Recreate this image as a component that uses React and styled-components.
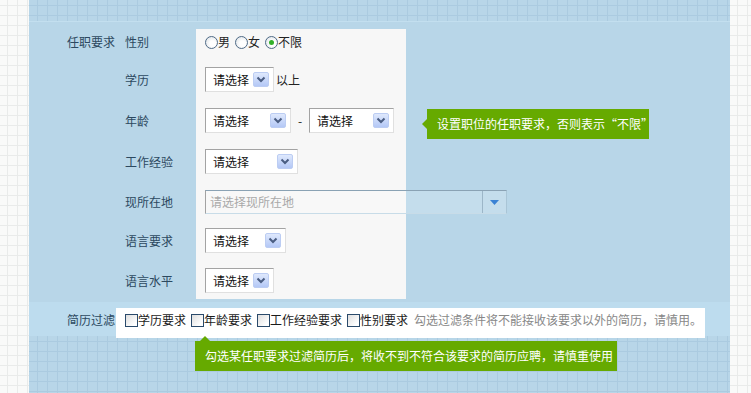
import React from 'react';
import styled, { createGlobalStyle, css } from 'styled-components';

const GlobalStyle = createGlobalStyle`
  html, body {
    margin: 0;
    padding: 0;
  }
  body {
    width: 751px;
    height: 393px;
    overflow: hidden;
    font-family: "Noto Sans CJK SC", "Noto Sans", sans-serif;
    font-size: 12px;
    color: #222;
    background-color: #f9faf9;
    background-image:
      linear-gradient(90deg, #e9ebea 1px, transparent 1px),
      linear-gradient(#e9ebea 1px, transparent 1px);
    background-size: 10px 10px;
    background-position: 7px 5px;
  }
`;

const blueGrid = css`
  background-color: #b8d6e8;
  background-image:
    linear-gradient(90deg, #abcbe0 1px, transparent 1px),
    linear-gradient(#abcbe0 1px, transparent 1px);
  background-size: 10px 10px;
  background-position: 8px 5px;
`;

const Panel = styled.div`
  position: relative;
  margin-left: 29px;
  width: 701px;
  height: 393px;
  display: flex;
  flex-direction: column;
`;

const TopStrip = styled.div`
  ${blueGrid};
  height: 21px;
  border-bottom: 1px solid #c3dfef;
`;

const Section = styled.div`
  display: flex;
  align-items: flex-start;
  padding: 7px 0 3px;
  background: #b8d6e8;
`;

const SectionTitle = styled.div`
  width: 87px;
  padding-right: 1px;
  box-sizing: border-box;
  text-align: right;
  line-height: ${(p) => p.$lh || 26}px;
  padding-top: ${(p) => p.$pt || 0}px;
  color: #2c4960;
  flex-shrink: 0;
`;

const Form = styled.div`
  display: grid;
  grid-template-columns: 80px 210px;
  grid-template-rows: 38px 41px 41px 41px 38px 40px 31px;
`;

const FieldLabel = styled.div`
  padding-left: 9px;
  line-height: ${(p) => p.$lh}px;
  color: #2c4960;
`;

const Field = styled.div`
  background: #f7f7f7;
  padding: ${(p) => p.$pt || 0}px 0 0 9px;
  display: flex;
  align-items: flex-start;
  gap: ${(p) => p.$gap || 0}px;
`;

const RadioGroup = styled.label`
  display: inline-flex;
  align-items: center;
  line-height: 14px;
`;

const RadioDot = styled.span`
  width: 13px;
  height: 13px;
  box-sizing: border-box;
  border-radius: 50%;
  border: 1px solid #4f6a86;
  background: radial-gradient(circle at 60% 60%, #ffffff 30%, #d8dde2 100%);
  display: inline-flex;
  align-items: center;
  justify-content: center;
  &::after {
    content: '';
    width: 5px;
    height: 5px;
    border-radius: 50%;
    background: ${(p) => (p.$on ? '#32b02a' : 'transparent')};
  }
`;

const Select = styled.div`
  width: ${(p) => p.$w}px;
  height: 25px;
  box-sizing: border-box;
  background: #fff;
  border: 1px solid;
  border-color: #a3a3a3 #e0e0e0 #e0e0e0 #a3a3a3;
  padding: 0 4px 0 7px;
  display: flex;
  align-items: center;
  justify-content: space-between;
  color: #111;
  flex-shrink: 0;
`;

const ArrowBox = styled.span`
  width: 16px;
  height: 15px;
  box-sizing: border-box;
  border: 1px solid #bccdf3;
  border-radius: 2px;
  background: linear-gradient(#dfe9fd, #b4c8f6);
  display: flex;
  align-items: center;
  justify-content: center;
`;

const Suffix = styled.span`
  line-height: 25px;
  margin-left: 2px;
`;

const Dash = styled.span`
  width: 18px;
  text-align: center;
  line-height: 25px;
`;

const CityInput = styled.div`
  width: 302px;
  height: 24px;
  box-sizing: border-box;
  flex-shrink: 0;
  display: flex;
  background: rgba(255, 255, 255, 0.18);
  border: 1px solid;
  border-color: #8aa2b4 #a9c5d6 #c8dce8 #a2a2a2;
`;

const Placeholder = styled.span`
  flex: 1;
  padding-left: 4px;
  line-height: 22px;
  color: #a9a9a9;
`;

const DropBtn = styled.span`
  width: 23px;
  border-left: 1px solid #9cb6c8;
  display: flex;
  align-items: center;
  justify-content: center;
`;

const FilterStrip = styled.div`
  display: flex;
  align-items: flex-start;
  height: 34px;
  background: #bddcee;
`;

const FilterBox = styled.div`
  margin-top: 6px;
  margin-bottom: -2px;
  width: 589px;
  height: 30px;
  box-sizing: border-box;
  background: #fff;
  padding: 5px 0 0 9px;
  display: flex;
  align-items: flex-start;
  gap: 5px;
  line-height: 14px;
  position: relative;
`;

const Check = styled.label`
  display: inline-flex;
  align-items: center;
  color: #1c1c1c;
`;

const CheckBox = styled.span`
  width: 13px;
  height: 13px;
  box-sizing: border-box;
  border: 1px solid #2a4a6b;
  background: linear-gradient(135deg, #dedede, #ffffff 80%);
`;

const Hint = styled.span`
  color: #888;
  margin-left: 1px;
`;

const BottomStrip = styled.div`
  ${blueGrid};
  flex: 1;
`;

const Tip = styled.div`
  position: absolute;
  background: #66aa00;
  color: #fff;
  height: 30px;
  line-height: 30px;
  padding-left: 10px;
  box-sizing: border-box;
  white-space: nowrap;
  &::before {
    content: '';
    position: absolute;
    border: 5px solid transparent;
  }
`;

const SideTip = styled(Tip)`
  left: 398px;
  top: 109px;
  width: 222px;
  &::before {
    left: -10px;
    top: 10px;
    border-right-color: #66aa00;
  }
`;

const DownTip = styled(Tip)`
  left: 166px;
  top: 341px;
  width: 422px;
  &::before {
    left: 5px;
    top: -10px;
    border-bottom-color: #66aa00;
  }
`;

const Chevron = () => (
  <svg width="10" height="7" viewBox="0 0 10 7">
    <path d="M1.5 1.5 L5 5 L8.5 1.5" fill="none" stroke="#4a5d82" strokeWidth="2" />
  </svg>
);

const Dropdown = ({ w }) => (
  <Select $w={w}>
    <span>请选择</span>
    <ArrowBox>
      <Chevron />
    </ArrowBox>
  </Select>
);

const filters = ['学历要求', '年龄要求', '工作经验要求', '性别要求'];

export default function App() {
  return (
    <>
      <GlobalStyle />
      <Panel>
        <TopStrip />
        <Section>
          <SectionTitle>任职要求</SectionTitle>
          <Form>
            <FieldLabel $lh={26}>性别</FieldLabel>
            <Field $pt={6} $gap={5}>
              <RadioGroup>
                <RadioDot />男
              </RadioGroup>
              <RadioGroup>
                <RadioDot />女
              </RadioGroup>
              <RadioGroup>
                <RadioDot $on />不限
              </RadioGroup>
            </Field>

            <FieldLabel $lh={25}>学历</FieldLabel>
            <Field>
              <Dropdown w={69} />
              <Suffix>以上</Suffix>
            </Field>

            <FieldLabel $lh={25}>年龄</FieldLabel>
            <Field>
              <Dropdown w={86} />
              <Dash>-</Dash>
              <Dropdown w={85} />
            </Field>

            <FieldLabel $lh={25}>工作经验</FieldLabel>
            <Field>
              <Dropdown w={93} />
            </Field>

            <FieldLabel $lh={24}>现所在地</FieldLabel>
            <Field>
              <CityInput>
                <Placeholder>请选择现所在地</Placeholder>
                <DropBtn>
                  <svg width="9" height="5" viewBox="0 0 9 5">
                    <path d="M0 0 H9 L4.5 5 Z" fill="#3a82d4" />
                  </svg>
                </DropBtn>
              </CityInput>
            </Field>

            <FieldLabel $lh={25}>语言要求</FieldLabel>
            <Field>
              <Dropdown w={81} />
            </Field>

            <FieldLabel $lh={25}>语言水平</FieldLabel>
            <Field>
              <Dropdown w={69} />
            </Field>
          </Form>
        </Section>
        <FilterStrip>
          <SectionTitle $lh={14} $pt={11}>简历过滤</SectionTitle>
          <FilterBox>
            {filters.map((f) => (
              <Check key={f}>
                <CheckBox />
                {f}
              </Check>
            ))}
            <Hint>勾选过滤条件将不能接收该要求以外的简历，请慎用。</Hint>
          </FilterBox>
        </FilterStrip>
        <BottomStrip />
        <SideTip>设置职位的任职要求，否则表示“不限”</SideTip>
        <DownTip>勾选某任职要求过滤简历后，将收不到不符合该要求的简历应聘，请慎重使用</DownTip>
      </Panel>
    </>
  );
}
